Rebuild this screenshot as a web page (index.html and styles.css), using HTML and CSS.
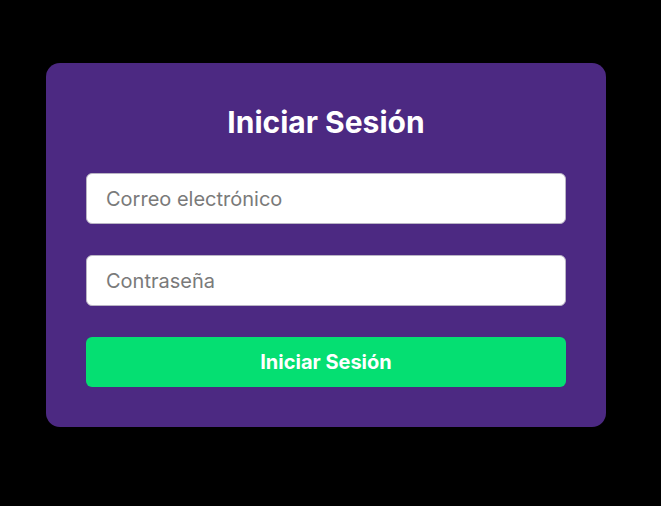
FILE: index.html
```html
<!DOCTYPE html>
<html lang="es">
<head>
<meta charset="utf-8">
<title>Iniciar Sesión</title>
<link rel="stylesheet" href="styles.css">
</head>
<body>
<main class="page">
  <form class="card">
    <h2 class="title">Iniciar Sesión</h2>
    <input class="field" type="email" placeholder="Correo electrónico">
    <input class="field" type="password" placeholder="Contraseña">
    <button class="btn" type="button">Iniciar Sesión</button>
  </form>
</main>
</body>
</html>
```
FILE: styles.css
```css
* { box-sizing: border-box; }
html, body { margin: 0; padding: 0; background: #000; }
body { font-family: Inter, "Noto Sans", sans-serif; }
.page {
  width: 661px;
  height: 506px;
  padding: 63px 0 0 46px;
}
.card {
  width: 560px;
  background: #4c2982;
  border-radius: 14px;
  padding: 40px;
  display: flex;
  flex-direction: column;
}
.title {
  margin: 1px 0 33px;
  text-align: center;
  color: #fff;
  font-size: 30px;
  font-weight: 700;
  line-height: 36px;
}
.field {
  height: 51px;
  margin: 0 0 31px;
  border: 1px solid #b9b4c4;
  border-radius: 6px;
  background: #fff;
  padding: 0 19px;
  font-family: inherit;
  font-size: 20px;
  color: #333;
}
.field::placeholder { color: #7a7a7a; }
.btn {
  height: 50px;
  border: 0;
  border-radius: 6px;
  background: #05df72;
  color: #fff;
  font-family: inherit;
  font-size: 20px;
  font-weight: 700;
}
```
